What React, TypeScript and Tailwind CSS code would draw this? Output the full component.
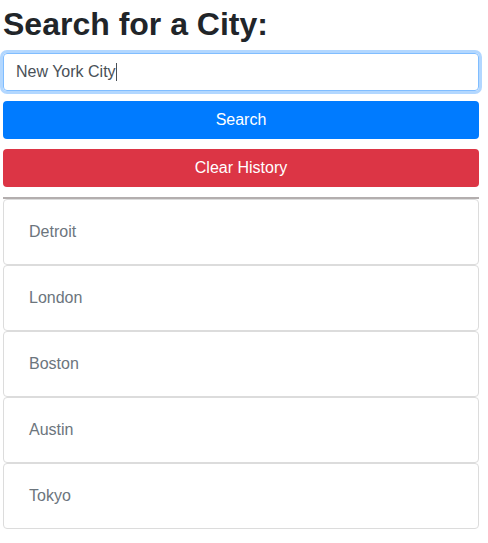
import React from "react";

const cities = ["Detroit", "London", "Boston", "Austin", "Tokyo"];

const App: React.FC = () => {
  return (
    <div className="pl-[3px] pt-[5px] w-[479px] font-['Liberation_Sans',Arial,sans-serif] text-[#212529]">
      <h2 className="text-[32px] font-bold leading-[38px] mb-[10px]">Search for a City:</h2>

      <div className="h-[38px] rounded-[4px] border border-[#80bdff] shadow-[0_0_0_3px_rgba(0,123,255,0.3)] flex items-center pl-[12px] text-[16px] text-[#495057]">
        <span>New York City</span>
        <span className="inline-block w-px h-[18px] bg-[#495057]"></span>
      </div>

      <button className="mt-[10px] w-full h-[38px] rounded-[4px] bg-[#007bff] text-white text-[16px]">
        Search
      </button>
      <button className="mt-[10px] w-full h-[38px] rounded-[4px] bg-[#dc3545] text-white text-[16px]">
        Clear History
      </button>

      <div className="mt-[10px] h-[2px] bg-[#b3aeae]"></div>

      <ul>
        {cities.map((city) => (
          <li
            key={city}
            className="h-[66px] border border-[#dcdcdc] rounded-[4px] px-[25px] flex items-center text-[16px] text-[#6c757d]"
          >
            {city}
          </li>
        ))}
      </ul>
    </div>
  );
};

export default App;
